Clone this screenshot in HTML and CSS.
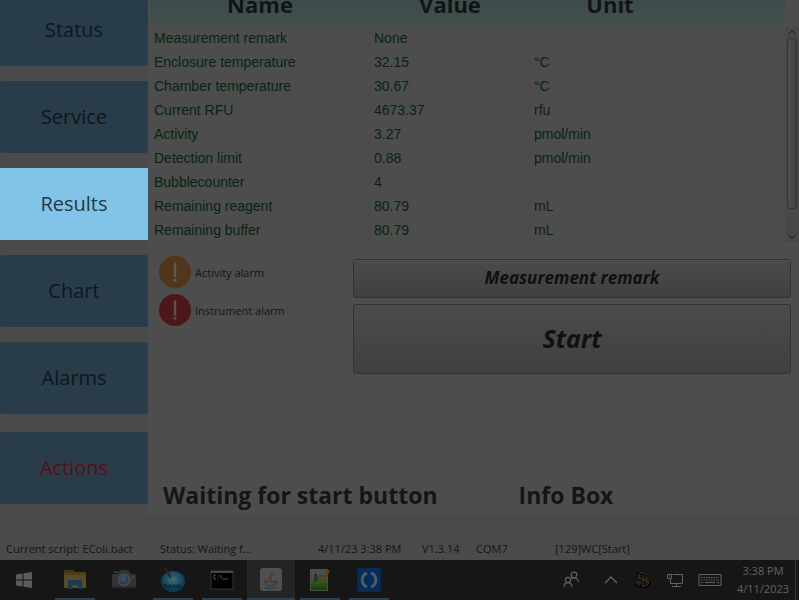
FILE: index.html
```html
<!DOCTYPE html>
<html lang="en">
<head>
<meta charset="utf-8">
<title>Instrument status</title>
<link rel="stylesheet" href="styles.css">
</head>
<body>
<div class="app">
  <div class="workspace">
    <nav class="sidebar">
      <button class="nav-button">Status</button>
      <button class="nav-button">Service</button>
      <button class="nav-button nav-active">Results</button>
      <button class="nav-button">Chart</button>
      <button class="nav-button">Alarms</button>
      <button class="nav-button nav-actions">Actions</button>
    </nav>
    <main class="content">
      <section class="readings">
        <table class="data">
          <colgroup><col class="col-name"><col class="col-value"><col class="col-unit"><col></colgroup>
          <thead><tr><th>Name</th><th>Value</th><th>Unit</th><th></th></tr></thead>
          <tbody>
            <tr><td>Measurement remark</td><td>None</td><td></td><td></td></tr>
            <tr><td>Enclosure temperature</td><td>32.15</td><td>°C</td><td></td></tr>
            <tr><td>Chamber temperature</td><td>30.67</td><td>°C</td><td></td></tr>
            <tr><td>Current RFU</td><td>4673.37</td><td>rfu</td><td></td></tr>
            <tr><td>Activity</td><td>3.27</td><td>pmol/min</td><td></td></tr>
            <tr><td>Detection limit</td><td>0.88</td><td>pmol/min</td><td></td></tr>
            <tr><td>Bubblecounter</td><td>4</td><td></td><td></td></tr>
            <tr><td>Remaining reagent</td><td>80.79</td><td>mL</td><td></td></tr>
            <tr><td>Remaining buffer</td><td>80.79</td><td>mL</td><td></td></tr>
          </tbody>
        </table>
        <div class="scrollbar">
          <svg width="10" height="6" viewBox="0 0 10 6"><path d="M1.500 5 5 1.800 8.500 5" fill="none" stroke="#292929" stroke-width="1.300"/></svg>
          <div class="track"><div class="thumb"></div></div>
          <svg width="10" height="6" viewBox="0 0 10 6"><path d="M1.500 1 5 4.200 8.500 1" fill="none" stroke="#292929" stroke-width="1.300"/></svg>
        </div>
      </section>
      <section class="controls">
        <div class="alarms">
          <div class="alarm"><svg width="32" height="32" viewBox="0 0 32 32"><circle cx="16" cy="16" r="16" fill="#50361a"/><path d="M16 7.500v13" stroke="#5e5952" stroke-width="2.400" stroke-linecap="round"/><circle cx="16" cy="24.300" r="1.500" fill="#5e5952"/></svg><span>Activity alarm</span></div>
          <div class="alarm"><svg width="32" height="32" viewBox="0 0 32 32"><circle cx="16" cy="16" r="16" fill="#4c1719"/><path d="M16 7.500v13" stroke="#5e5152" stroke-width="2.400" stroke-linecap="round"/><circle cx="16" cy="24.300" r="1.500" fill="#5e5152"/></svg><span>Instrument alarm</span></div>
        </div>
        <div class="commands">
          <button class="command remark">Measurement remark</button>
          <button class="command start">Start</button>
        </div>
      </section>
      <section class="messages">
        <h2 class="message">Waiting for start button</h2>
        <h2 class="message info">Info Box</h2>
      </section>
    </main>
  </div>
  <footer class="statusbar">
    <span>Current script: EColi.bact</span><span>Status: Waiting f...</span><span>4/11/23 3:38 PM</span><span>V1.3.14</span><span>COM7</span><span>[129]WC[Start]</span>
  </footer>
  <div class="taskbar">
    <div class="tasks">
      <button class="task home" aria-label="Windows"><svg width="18" height="18" viewBox="0 0 18 18" fill="#5b5b5b"><path d="M1 3.500 7.500 2.500v6H1zM8.500 2.300 17 1v7.500H8.500zM1 9.500h6.500v6L1 14.600zM8.500 9.500H17V17l-8.500-1.300z"/></svg></button>
      <button class="task running" aria-label="Files"><svg width="24" height="24" viewBox="0 0 24 24"><path d="M1 3q0-1 1-1h8l2 2h10q1 0 1 1v14q0 1-1 1H1z" fill="#4e3e17"/><path d="M1 7h22v12q0 1-1 1H1z" fill="#594c25"/><path d="M1 2.500h9v2H1z" fill="#4b340a"/><path d="M5 21v-7q0-2 2-2h10q2 0 2 2v7h-4v-4H9v4z" fill="#153d55"/></svg></button>
      <button class="task" aria-label="Camera"><svg width="24" height="24" viewBox="0 0 24 24"><path d="M2 3h4v2H2z" fill="#164152"/><path d="M8 2h8l3 4h4q1 0 1 1v13H0V7q0-1 1-1h5z" fill="#313335"/><path d="M0 18h24v2H0z" fill="#28292a"/><circle cx="12" cy="12" r="6.500" fill="#4a4b50"/><circle cx="12" cy="12" r="4.500" fill="#2b3057"/><path d="M9 14a4 4 0 0 1 5-6v5z" fill="#314e63"/><path d="M11 16q5 0 5-5l-6 3z" fill="#45375a"/><circle cx="21" cy="9" r="1" fill="#545454"/></svg></button>
      <button class="task running" aria-label="Twitter"><svg width="26" height="26" viewBox="0 0 26 26"><defs><radialGradient id="orb" cy=".4"><stop stop-color="#456c76"/><stop offset=".6" stop-color="#1c4f60"/><stop offset="1" stop-color="#0b3a4a"/></radialGradient></defs><ellipse cx="13" cy="14.500" rx="12" ry="10.500" fill="url(#orb)"/><path d="M4 2 6 1l6 10-2-1z" fill="#47191d"/><path d="m7 5 3 1 1 6-4-5z" fill="#242c35"/><path d="M4 17v3m2-3v3m2-2v2m2-3v3m2-2v2m2-3v3m2-2v2m2-3v3m2-2v2" stroke="#0b1c34"/><path d="M3 20h20" stroke="#13293f"/></svg></button>
      <button class="task running" aria-label="Command prompt"><svg width="24" height="20" viewBox="0 0 24 20"><path d="M1 1h22v18H1z" fill="#000" stroke="#343434"/><path d="M1 1h22v2H1z" fill="#484848"/><path d="M6 5H4v4h2M8 5.500v1m0 2v1M10 5l2 4m1 0h5" fill="none" stroke="#545454"/></svg></button>
      <button class="task running selected" aria-label="Java"><svg width="24" height="24" viewBox="0 0 24 24"><rect x="1" width="22" height="23" rx="3" fill="#4f5051"/><path d="M13 3c2 3-5 4-2 9M15 6c-4 2-2 3-3 6" fill="none" stroke="#593923" stroke-width="1.400"/><path d="M6 13q5 1.500 10 0-1 4-3 5H9q-2-1-3-5zm10 1q3-1 2 1-1 2-3 2M5 20q7 1.500 13-1" fill="none" stroke="#303b44" stroke-width="1.200"/></svg></button>
      <button class="task running" aria-label="Notepad"><svg width="24" height="24" viewBox="0 0 24 24"><defs><linearGradient id="page" x2="0" y2="1"><stop offset=".3" stop-color="#4a4f48"/><stop offset=".6" stop-color="#2f551c"/><stop offset="1" stop-color="#16400b"/></linearGradient></defs><path d="M2 1h18v22H2z" fill="#4a4f48"/><path d="M3 2h16v20H3z" fill="url(#page)"/><path d="M7 14V6q2 0 2 2v5m2-5h2m1 0h2" fill="none" stroke="#142016"/><path d="m22 2-5 12-3 2 1-3 4-11z" fill="#65420c"/></svg></button>
      <button class="task running" aria-label="Support"><svg width="24" height="24" viewBox="0 0 24 24"><rect width="24" height="24" rx="3" fill="#032c59"/><path d="M10 5a7.500 7.500 0 0 0 0 14m4-14a7.500 7.500 0 0 1 0 14" fill="none" stroke="#505860" stroke-width="3"/></svg></button>
    </div>
    <div class="tray">
      <svg class="people" width="18" height="18" viewBox="0 0 18 18" fill="none" stroke="#626262" stroke-width="1.200"><circle cx="12" cy="4" r="2.800"/><circle cx="6" cy="9" r="2.600"/><path d="M2 16q0-4.400 4-4.400t4 4.400M9.500 8q6-3 7 3"/></svg>
      <svg class="caret" width="14" height="18" viewBox="0 0 14 18" fill="none" stroke="#626262" stroke-width="1.400"><path d="m1 12 6-6 6 6"/></svg>
      <svg width="18" height="18" viewBox="0 0 18 18" fill="none"><path d="M3 3h12M9 1v15M2 7h14M2 11q0 5 7 5t7-5M5 14h8" stroke="#050505" stroke-width="2.500"/><path d="M11 3h4M3 7h3m5 0h5M9 4v12m0-1q5 0 6-3M2 11q1 3 4 4" stroke="#3c3c38"/><path d="M11 2Q5 1 5 5q0 2 4 3 5 1 5 4M3 10q1 2 4 3" stroke="#4a2b0a" stroke-width="1.300"/></svg>
      <svg width="18" height="18" viewBox="0 0 18 18" fill="none" stroke="#626262"><path d="M6.500 3.500h10v9h-12v-5M10.500 12.500v3M6 15.500h9M1.500 3.500h4v4h-4zM3 5h1"/></svg>
      <svg width="24" height="18" viewBox="0 0 24 18" fill="none" stroke="#626262"><path d="M1 3.500h22v11H1z"/><path d="M3 6.500h18M3 9h18" stroke-dasharray="1.500 1"/><path d="M3 11.500h2m2 0h10m2 0h2"/></svg>
      <div class="clock"><span>3:38 PM</span><span>4/11/2023</span></div>
    </div>
  </div>
</div>
</body>
</html>
```
FILE: styles.css
```css
* { box-sizing: border-box; }
body {
  margin: 0;
  background: #4d4d4d;
  color: #151515;
  font-family: "Open Sans", "Noto Sans", sans-serif;
  font-size: 11px;
  overflow: hidden;
}
button { font: inherit; color: inherit; border: 0; padding: 0; }
svg { display: block; flex: none; }
.app { display: flex; flex-direction: column; min-height: 100vh; }
.workspace { flex: 1; display: flex; }
.sidebar {
  flex: none;
  width: 148px;
  display: flex;
  flex-direction: column;
  gap: 15px;
  margin-top: -6px;
  background: #4a4a4a;
}
.nav-button {
  height: 72px;
  padding-bottom: 2px;
  border-radius: 3px;
  background: #283d49;
  color: #101619;
  font-size: 20px;
}
.nav-active { background: #82c4e8; color: #243845; border-radius: 0; }
.nav-actions { margin-top: 3px; color: #590d15; }
.content { flex: 1; min-width: 0; display: flex; flex-direction: column; }
.readings { display: flex; margin: -27px 0 0 2px; }
.data {
  flex: 1;
  min-width: 0;
  table-layout: fixed;
  border-spacing: 0;
  font-family: "Liberation Sans", Arial, sans-serif;
  font-size: 14px;
  color: #07250d;
}
.col-name { width: 220px; }
.col-value, .col-unit { width: 160px; }
.data thead { background: linear-gradient(#354345, #3d4b4d 55%, #43504b); }
.data th {
  height: 53px;
  padding: 8px 0 0;
  color: #121414;
  font: bold 22px/32px "Open Sans", "Noto Sans", sans-serif;
}
.data td { height: 24px; padding: 0 4px; line-height: 24px; border-right: 1px solid #494949; }
.data td:last-child { border-right: 0; }
.scrollbar {
  flex: none;
  width: 14px;
  margin-top: 54px;
  padding: 2px 0;
  display: flex;
  flex-direction: column;
  align-items: center;
  background: #484848;
}
.track { flex: 1; width: 10px; padding: 3px 0 25px; }
.thumb {
  height: 100%;
  border: 1px solid #353535;
  border-radius: 3px;
  background: linear-gradient(90deg, #4d4d4d, #444);
}
.controls { display: flex; gap: 8px; margin: 14px 8px 0 11px; }
.alarms { flex: none; width: 186px; display: flex; flex-direction: column; gap: 6px; }
.alarm { display: flex; align-items: center; gap: 4px; height: 32px; }
.commands { flex: 1; display: flex; flex-direction: column; gap: 6px; padding-top: 3px; }
.command {
  padding-bottom: 2px;
  border: 1px solid #333;
  border-radius: 3px;
  background: linear-gradient(#4b4b4b, #404040);
  box-shadow: inset 0 1px #505050;
  color: #101010;
  font-weight: bold;
  font-style: italic;
}
.remark { height: 39px; font-size: 17px; }
.start { height: 70px; font-size: 25px; }
.messages { flex: 1; display: flex; align-items: flex-end; padding: 0 16px 4px 15px; }
.message { flex: none; width: 290px; margin: 0; font-size: 23px; line-height: 34px; white-space: nowrap; }
.info { width: 226px; text-align: center; }
.statusbar {
  display: grid;
  grid-template-columns: 154px 158px 104px 54px 79px 1fr;
  align-items: end;
  height: 44px;
  padding: 0 6px 2px;
  line-height: 18px;
  white-space: nowrap;
  background: linear-gradient(#494949, #4b4b4b);
}
.taskbar {
  display: flex;
  justify-content: space-between;
  height: 40px;
  background: #161616;
}
.tasks { display: flex; gap: 1px; }
.task {
  position: relative;
  width: 48px;
  display: flex;
  align-items: center;
  justify-content: center;
  background: none;
}
.home { margin-right: 2px; }
.running::after {
  content: "";
  position: absolute;
  left: 4px;
  right: 4px;
  bottom: 0;
  height: 2px;
  background: #2b4150;
}
.selected { background: #242424; }
.selected::after { left: 0; right: 0; }
.tray { display: flex; align-items: center; gap: 14px; border-right: 1px solid #353535; margin-right: 3px; }
.people { margin-right: 10px; }
.caret { margin-right: 2px; }
.clock {
  display: flex;
  flex-direction: column;
  align-items: center;
  width: 54px;
  margin-right: 5px;
  color: #626262;
  line-height: 18px;
}
```
